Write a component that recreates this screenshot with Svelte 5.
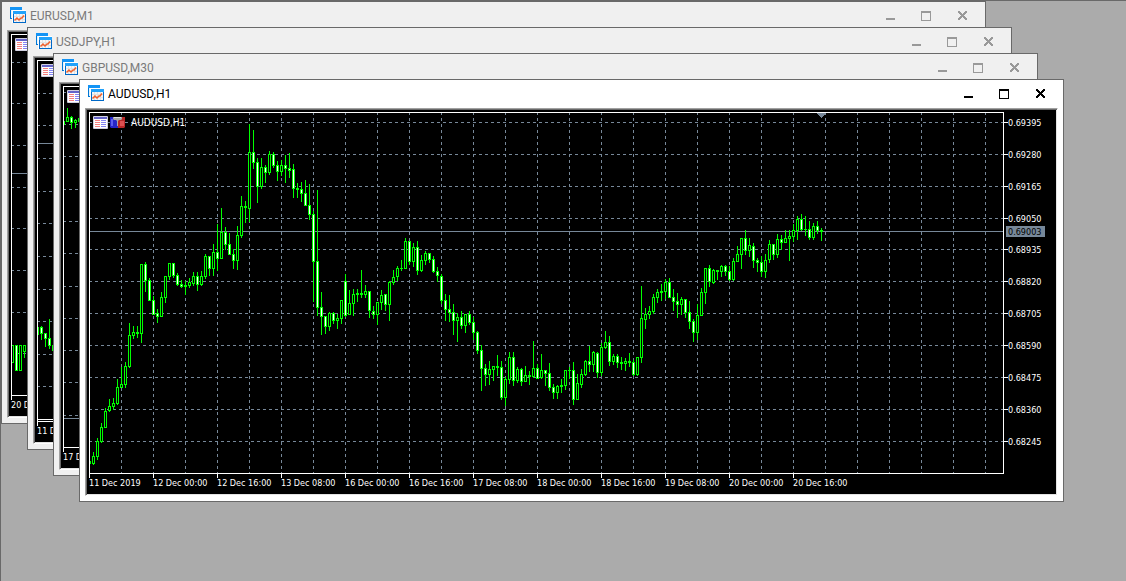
<script>
  // candle rows: high, body top, body bottom, low, 1 = falling
  const audusd = [
    [461, 461, 463, 463, 0], [452, 456, 463, 464, 0], [438, 441, 456, 459, 0], [423, 427, 441, 442, 0],
    [408, 411, 427, 427, 0], [399, 406, 410, 411, 0], [398, 403, 406, 409, 0], [379, 387, 403, 404, 0],
    [367, 384, 387, 387, 0], [362, 366, 384, 387, 0], [323, 335, 366, 367, 0], [326, 332, 335, 338, 0],
    [326, 332, 333, 337, 0], [264, 264, 333, 342, 0], [262, 264, 280, 291, 1], [278, 280, 300, 300, 1],
    [296, 300, 314, 314, 1], [309, 313, 316, 322, 1], [292, 297, 316, 316, 0], [276, 276, 297, 302, 0],
    [263, 263, 276, 279, 0], [263, 263, 275, 277, 1], [273, 275, 284, 285, 1], [280, 284, 286, 287, 1],
    [281, 285, 286, 294, 0], [278, 282, 285, 287, 0], [272, 276, 283, 285, 0], [272, 276, 284, 290, 1],
    [271, 276, 284, 285, 0], [254, 256, 276, 278, 0], [256, 256, 268, 275, 1], [244, 252, 268, 275, 0],
    [224, 252, 258, 270, 1], [208, 232, 258, 258, 0], [227, 232, 244, 249, 1], [233, 244, 254, 254, 1],
    [249, 254, 260, 268, 1], [226, 235, 260, 269, 0], [196, 206, 235, 237, 0], [201, 206, 207, 222, 0],
    [124, 152, 208, 221, 0], [130, 152, 162, 168, 1], [158, 162, 186, 202, 1], [158, 167, 186, 188, 0],
    [165, 167, 172, 182, 1], [151, 154, 172, 174, 0], [152, 154, 165, 167, 1], [161, 165, 171, 180, 1],
    [160, 165, 171, 175, 0], [155, 165, 168, 182, 1], [153, 168, 170, 177, 1], [164, 169, 188, 197, 1],
    [183, 188, 189, 197, 0], [182, 189, 193, 201, 1], [180, 193, 205, 205, 1], [184, 205, 214, 219, 1],
    [211, 214, 261, 301, 1], [190, 261, 307, 315, 1], [292, 307, 316, 334, 1], [316, 316, 326, 333, 1],
    [312, 313, 326, 330, 0], [312, 313, 320, 323, 1], [314, 318, 320, 328, 0], [300, 300, 318, 323, 0],
    [274, 281, 315, 316, 1], [290, 303, 314, 314, 0], [289, 294, 303, 315, 0], [289, 293, 294, 301, 0],
    [270, 293, 294, 297, 0], [285, 291, 294, 297, 0], [291, 291, 310, 317, 1], [306, 311, 314, 318, 1],
    [302, 302, 314, 324, 0], [290, 295, 302, 309, 0], [294, 294, 304, 310, 1], [281, 282, 304, 320, 0],
    [270, 277, 282, 284, 0], [266, 268, 276, 280, 0], [260, 268, 268, 270, 0], [238, 241, 268, 268, 0],
    [241, 241, 261, 264, 1], [243, 247, 261, 266, 0], [241, 247, 270, 274, 1], [255, 260, 270, 271, 0],
    [251, 253, 260, 264, 0], [253, 253, 259, 262, 1], [256, 259, 271, 272, 1], [267, 271, 275, 281, 1],
    [274, 276, 300, 303, 1], [294, 300, 309, 320, 1], [295, 309, 312, 321, 1], [304, 312, 320, 334, 1],
    [313, 317, 320, 341, 0], [311, 317, 325, 328, 1], [314, 314, 325, 332, 0], [311, 314, 322, 324, 1],
    [317, 322, 332, 339, 1], [331, 332, 350, 353, 1], [345, 350, 368, 390, 1], [364, 368, 374, 385, 1],
    [361, 369, 374, 384, 0], [366, 366, 369, 380, 0], [355, 366, 367, 375, 0], [361, 367, 397, 399, 1],
    [377, 379, 397, 405, 0], [352, 357, 379, 383, 0], [352, 357, 380, 385, 1], [367, 369, 380, 382, 0],
    [368, 369, 381, 385, 1], [366, 375, 381, 381, 0], [371, 375, 376, 384, 0], [341, 368, 376, 377, 0],
    [364, 368, 378, 378, 1], [354, 370, 377, 378, 0], [370, 370, 373, 385, 1], [363, 373, 387, 390, 1],
    [384, 387, 392, 398, 1], [385, 386, 392, 398, 0], [379, 385, 386, 392, 0], [370, 370, 385, 389, 0],
    [367, 370, 370, 378, 0], [362, 370, 399, 404, 1], [374, 383, 399, 399, 0], [369, 374, 384, 387, 0],
    [360, 361, 374, 375, 0], [346, 361, 364, 371, 1], [351, 352, 364, 371, 0], [352, 353, 372, 377, 1],
    [343, 347, 372, 375, 0], [331, 342, 347, 348, 0], [336, 342, 361, 365, 1], [354, 356, 361, 364, 0],
    [354, 356, 362, 367, 1], [357, 362, 363, 369, 0], [358, 361, 363, 370, 0], [353, 361, 362, 366, 0],
    [360, 362, 374, 375, 1], [357, 357, 374, 375, 0], [286, 318, 357, 362, 0], [308, 314, 319, 328, 0],
    [306, 311, 314, 318, 0], [294, 297, 311, 313, 0], [289, 292, 297, 302, 0], [284, 291, 292, 300, 0],
    [279, 282, 291, 298, 0], [278, 282, 297, 297, 1], [289, 297, 301, 310, 1], [293, 301, 304, 317, 1],
    [297, 299, 304, 314, 0], [299, 299, 312, 317, 1], [301, 312, 321, 328, 1], [319, 321, 332, 341, 1],
    [304, 315, 332, 339, 0], [288, 292, 315, 315, 0], [268, 268, 292, 303, 0], [265, 268, 281, 286, 1],
    [269, 270, 282, 283, 0], [270, 270, 271, 279, 0], [265, 266, 271, 276, 0], [265, 266, 271, 275, 1],
    [266, 271, 279, 280, 1], [258, 261, 279, 280, 0], [246, 254, 261, 261, 0], [238, 238, 254, 268, 0],
    [230, 238, 250, 254, 1], [238, 245, 250, 256, 0], [243, 246, 260, 267, 1], [258, 260, 262, 271, 1],
    [256, 262, 271, 276, 1], [254, 260, 271, 277, 0], [240, 244, 259, 262, 0], [244, 244, 254, 259, 1],
    [234, 239, 254, 257, 0], [235, 239, 242, 249, 1], [230, 238, 242, 242, 0], [230, 236, 238, 260, 0],
    [224, 230, 236, 241, 0], [216, 219, 230, 239, 0], [214, 219, 229, 230, 1], [216, 229, 229, 235, 0],
    [221, 229, 237, 239, 1], [223, 226, 237, 239, 0], [221, 226, 230, 233, 1], [228, 230, 231, 240, 0],
  ];

  const windows = [
    {
      title: "EURUSD,M1", x: 1, y: 1, bid: 173, shift: 1, rows: [62, 103, 145, 187, 228, 270, 312, 353],
      times: ["20 Dec 2019"],
      candles: [[345, 345, 362, 362, 0], [345, 345, 370, 370, 1], [345, 345, 370, 370, 0], [345, 345, 351, 357, 0], [348, 348, 359, 359, 0]],
    },
    {
      title: "USDJPY,H1", x: 27, y: 27, bid: 143, shift: 0, rows: [93, 125, 158, 191, 223, 256, 289, 321, 354, 386, 419],
      times: ["11 Dec 2019"], floor: 419,
      candles: [[327, 327, 334, 334, 0], [326, 327, 333, 339, 1], [333, 333, 338, 346, 1], [319, 338, 345, 348, 1], [345, 345, 350, 350, 0]],
    },
    {
      title: "GBPUSD,M30", x: 53, y: 53, bid: 418, shift: 0, rows: [92, 124, 156, 189, 221, 253, 286, 318, 350, 382, 415],
      times: ["17 Dec 2019"],
      candles: [[121, 121, 124, 124, 0], [108, 117, 121, 121, 0], [116, 117, 122, 128, 1], [119, 120, 122, 127, 0], [116, 118, 121, 124, 0]],
    },
    {
      title: "AUDUSD,H1", x: 79, y: 79, bid: 231, shift: 0, rows: [122, 154, 186, 218, 249, 281, 313, 345, 377, 409, 441],
      active: true, price: "0.69003",
      prices: ["0.69395", "0.69280", "0.69165", "0.69050", "0.68935", "0.68820", "0.68705", "0.68590", "0.68475", "0.68360", "0.68245"],
      times: [
        "11 Dec 2019", "12 Dec 00:00", "12 Dec 16:00", "13 Dec 08:00", "16 Dec 00:00", "16 Dec 16:00",
        "17 Dec 08:00", "18 Dec 00:00", "18 Dec 16:00", "19 Dec 08:00", "20 Dec 00:00", "20 Dec 16:00",
      ],
      candles: audusd,
    },
  ];

  const width = 985;
  const height = 423;
  const plotWidth = 914;
  const plotHeight = 361;
</script>

<main class="desktop">
  {#each windows as win}
    {@const left = win.x + 10}
    {@const top = win.y + 33}
    {@const right = left + plotWidth}
    {@const bottom = top + plotHeight}
    <section
      class="window"
      class:active={win.active}
      style="left: {win.x}px; top: {win.y}px; width: {width}px; height: {height}px;"
    >
      <header class="titlebar">
        <svg class="appicon" viewBox="0 0 16 16" aria-hidden="true">
          <rect x="0" y="0" width="12" height="12" fill="#0078d7" />
          <rect x="0" y="0" width="12" height="3" fill="#1494f5" />
          <rect x="1" y="3" width="10" height="8" fill="#e9f2fa" />
          <rect x="2" y="3" width="14" height="13" fill="#fff" />
          <rect x="3" y="4" width="13" height="12" fill="#0069c8" />
          <rect x="3" y="4" width="13" height="3" fill="#22a2fb" />
          <rect x="4" y="7" width="11" height="8" fill="#f6f6f6" />
          <path d="M6.5 7v8M9.5 7v8M12.5 7v8M4 9.5h11M4 12.5h11" stroke="#e2e2e2" />
          <path d="M4.5 13.5L7 11l2 2 2-2 1 0 2-2.500" fill="none" stroke="#f0602c" stroke-width="1.500" />
        </svg>
        <h2>{win.title}</h2>
        <div class="controls">
          <button aria-label="Minimize">
            <svg viewBox="0 0 12 12"><rect x="1" y="9" width="9" height="2" /></svg>
          </button>
          <button aria-label="Maximize">
            <svg viewBox="0 0 12 12"><path d="M0 2h10v10H0zM1 4v7h8V4z" fill-rule="evenodd" /></svg>
          </button>
          <button aria-label="Close">
            <svg viewBox="0 0 12 12">
              <path d="M1 2h2v1h1v1h1v1h1V4h1V3h1V2h2v2H9v1H8v1H7v1h1v1h1v1h1v2H8v-1H7V9H6V8H5v1H4v1H3v1H1V9h1V8h1V7h1V6H3V5H2V4H1z" />
            </svg>
          </button>
        </div>
      </header>

      <div class="client">
        <svg class="chart" viewBox="{win.x + 8} {win.y + 31} 969 384" preserveAspectRatio="xMinYMin">
          <clipPath id="plot-{win.x}">
            <rect x={left + 1} y={top} width={plotWidth} height={plotHeight} />
          </clipPath>
          <g class="grid">
            {#each win.rows as y}
              <line x1={left} x2={right} y1={y + 0.5} y2={y + 0.5} />
            {/each}
            {#each Array(28) as _, i}
              <line x1={left + 32 * (i + 1) + 0.5} x2={left + 32 * (i + 1) + 0.5} y1={top} y2={bottom} />
            {/each}
          </g>
          <rect class="bid" x={left} y={win.bid} width={plotWidth} height="1" />
          <g clip-path="url(#plot-{win.x})">
            {#each win.candles as [high, open, close, low, down], i}
              {@const x = left + win.shift + 4 * i}
              <rect class="candle" {x} y={high} width="1" height={low - high + 1} />
              <rect class="candle" x={x - 1} y={open} width="3" height={close - open + 1} />
              {#if close - open > 1}
                <rect class={down ? "down" : "up"} {x} y={open + 1} width="1" height={close - open - 1} />
              {/if}
            {/each}
          </g>
          {#if win.active}
            <path class="bid" d="M817 113h9v1h-1v1h-1v1h-1v1h-1v1h-1v-1h-1v-1h-1v-1h-1v-1h-1z" />
          {/if}
          <g class="axis">
            <rect x={left} y={top} width={plotWidth + 1} height="1" />
            <rect x={left} y={top} width="1" height={plotHeight} />
            <rect x={right} y={top} width="1" height={plotHeight} />
            <rect x={left} y={bottom} width={plotWidth + 1} height="1" />
            {#if win.floor}
              <rect x={left} y={win.floor} width={plotWidth} height="1" />
            {/if}
            {#each win.times as time, i}
              <rect x={left + 64 * i} y={bottom} width="1" height="5" />
              <text x={left + 64 * i} y={bottom + 13}>{time}</text>
            {/each}
            {#each win.prices ?? [] as price, i}
              <rect x={right} y={win.rows[i]} width="5" height="1" />
              <text x={right + 5} y={win.rows[i] + 4}>{price}</text>
            {/each}
          </g>
          {#if win.price}
            <rect class="bid" x={right + 3} y={win.bid - 5} width="39" height="11" />
            <text class="current" x={right + 5} y={win.bid + 4}>{win.price}</text>
          {/if}
        </svg>

        <div class="toolbar">
          <button aria-label="Depth of market">
            <svg viewBox="0 0 15 13">
              <rect x="0" y="0" width="15" height="13" rx="1" fill="#cfcfdf" />
              <rect x="1" y="1" width="13" height="2" fill="#6464c8" />
              <rect x="1" y="3" width="13" height="9" fill="#fff" />
              <path d="M2 4.500h5M2 6.500h5M2 8.500h5M2 10.500h5" stroke="#f58080" />
              <path d="M8 4.500h5M8 6.500h5M8 8.500h5M8 10.500h5" stroke="#8484f4" />
            </svg>
          </button>
          <button aria-label="Quick trading">
            <svg viewBox="0 0 15 13">
              <path d="M0 1h3l1 2h4v9H1L0 11z" fill="#2626c8" />
              <path d="M1 3h2v7H1z" fill="#5c5cf0" />
              <path d="M15 1h-3l-1 2H8v9h6l1-1z" fill="#b82828" />
              <path d="M10 5h4v5h-4z" fill="#dc5050" />
              <path d="M3 1h9v2l-1 1H9L8 5v5H7V5L6 4H4L3 3z" fill="#a8a8a8" />
              <path d="M4 1h7v1H4z" fill="#dedede" />
            </svg>
          </button>
          {#if win.active}
            <span>{win.title}</span>
          {/if}
        </div>
      </div>
    </section>
  {/each}
</main>

<style>
  :global(body) {
    margin: 0;
  }
  .desktop {
    position: relative;
    box-sizing: border-box;
    min-height: 100vh;
    overflow: hidden;
    background: #ababab;
    border-top: 1px solid #696969;
    border-left: 1px solid #696969;
  }
  .window {
    position: absolute;
    box-sizing: border-box;
    display: flex;
    flex-direction: column;
    margin: -1px 0 0 -1px;
    padding: 0 5px 5px;
    border: 1px solid #696969;
    background: #f0f0f0;
    color: #999;
  }
  .window.active {
    background: #fff;
    color: #000;
  }
  .titlebar {
    box-sizing: border-box;
    display: flex;
    align-items: center;
    height: 28px;
    padding: 0 0 2px 3px;
  }
  .appicon {
    width: 16px;
    height: 16px;
    margin-right: 4px;
  }
  h2 {
    flex: 1;
    margin: 0;
    padding-top: 2px;
    font: 12px/16px Roboto, "Open Sans", sans-serif;
    color: #7a7a7a;
  }
  .active h2 {
    color: #000;
  }
  .controls {
    display: flex;
    margin-right: -1px;
  }
  button {
    display: flex;
    padding: 0;
    border: 0;
    background: none;
    color: inherit;
  }
  .controls button {
    align-items: center;
    justify-content: center;
    width: 36px;
    height: 24px;
  }
  .controls svg {
    width: 12px;
    height: 12px;
    fill: currentColor;
    shape-rendering: crispEdges;
  }
  .client {
    position: relative;
    flex: 1;
    min-height: 0;
    border: 1px solid;
    border-color: #a0a0a0 #fff #fff #a0a0a0;
    background: #000;
    box-shadow: inset 1px 1px #696969, inset -1px -1px #e3e3e3;
    padding: 1px;
  }
  .chart {
    display: block;
    width: 100%;
    height: 100%;
    shape-rendering: crispEdges;
  }
  .chart text {
    font: 9px "DejaVu Sans Condensed", "DejaVu Sans", sans-serif;
    fill: #fff;
  }
  .chart .current {
    fill: #000;
  }
  .grid {
    stroke: #778899;
    stroke-dasharray: 3 3;
  }
  .bid {
    fill: #778899;
  }
  .candle {
    fill: #00ff00;
  }
  .up {
    fill: #000;
  }
  .down,
  .axis {
    fill: #fff;
  }
  .toolbar {
    position: absolute;
    top: 7px;
    left: 7px;
    display: flex;
    align-items: center;
    gap: 2px;
    color: #fff;
    font: 10px/13px "DejaVu Sans Condensed", "DejaVu Sans", sans-serif;
  }
  .toolbar svg {
    width: 15px;
    height: 13px;
  }
  .toolbar span {
    margin-left: 4px;
  }
</style>
